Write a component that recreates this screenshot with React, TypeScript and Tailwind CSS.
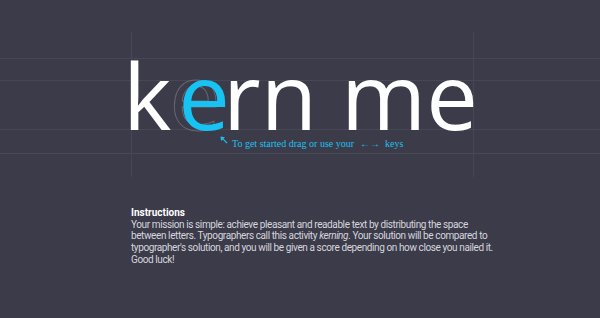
import React from "react";

const sans = { fontFamily: '"Open Sans", "Liberation Sans", sans-serif' };

export default function App() {
  return (
    <div className="relative w-[600px] h-[318px] overflow-hidden bg-[#3c3b49]" style={sans}>
      {/* guide lines */}
      <div className="absolute left-0 right-0 top-[58px] h-px bg-[#474655]" />
      <div className="absolute left-0 right-0 top-[80px] h-px bg-[#474655]" />
      <div className="absolute left-0 right-0 top-[129px] h-px bg-[#474655]" />
      <div className="absolute left-0 right-0 top-[153px] h-px bg-[#4a4958]" />
      <div className="absolute top-[32px] h-[145px] left-[131px] w-px bg-[#474655]" />
      <div className="absolute top-[32px] h-[145px] left-[473px] w-px bg-[#474655]" />

      <div className="relative flex flex-col">
        <div className="h-[49px]" />
        <div className="flex items-baseline text-[92px] leading-none text-white pl-[123px]">
          <span>k</span>
          <span className="relative">
            <span className="absolute left-[-2px] top-0 text-transparent [-webkit-text-stroke:1px_#656574]">e</span>
            <span className="relative left-[7px] text-[#16c3f2]">e</span>
          </span>
          <span>r</span>
          <span>n</span>
          <span className="ml-[24px]">m</span>
          <span>e</span>
        </div>
        <div className="flex items-center -mt-[5px] pl-[220px] text-[10px] text-[#1ec0ef]" style={{ fontFamily: '"Liberation Serif", serif' }}>
          <svg width="8" height="8" viewBox="0 0 9 9" className="mr-[4px] -mt-[7px]">
            <path d="M1.5 1.5 L8 8" stroke="#1ec0ef" strokeWidth="1.4" />
            <path d="M0.5 0.5 L5.5 1.3 L1.3 5.5 Z" fill="#1ec0ef" />
          </svg>
          <span>To get started drag or use your</span>
          <span className="ml-[6px] mr-[5px]">←→</span>
          <span>keys</span>
        </div>

        <div
          className="mt-[56px] ml-[131px] whitespace-nowrap text-[10px] tracking-[-0.4px] leading-[11.7px] text-[#d6d6de]"
          style={{ fontFamily: 'Roboto, "Liberation Sans", sans-serif' }}
        >
          <div className="font-bold text-white tracking-normal">Instructions</div>
          <p>
            Your mission is simple: achieve pleasant and readable text by distributing the space
            <br />
            between letters. Typographers call this activity <em className="italic">kerning</em>. Your solution will be compared to
            <br />
            typographer's solution, and you will be given a score depending on how close you nailed it.
            <br />
            Good luck!
          </p>
        </div>
      </div>
    </div>
  );
}
